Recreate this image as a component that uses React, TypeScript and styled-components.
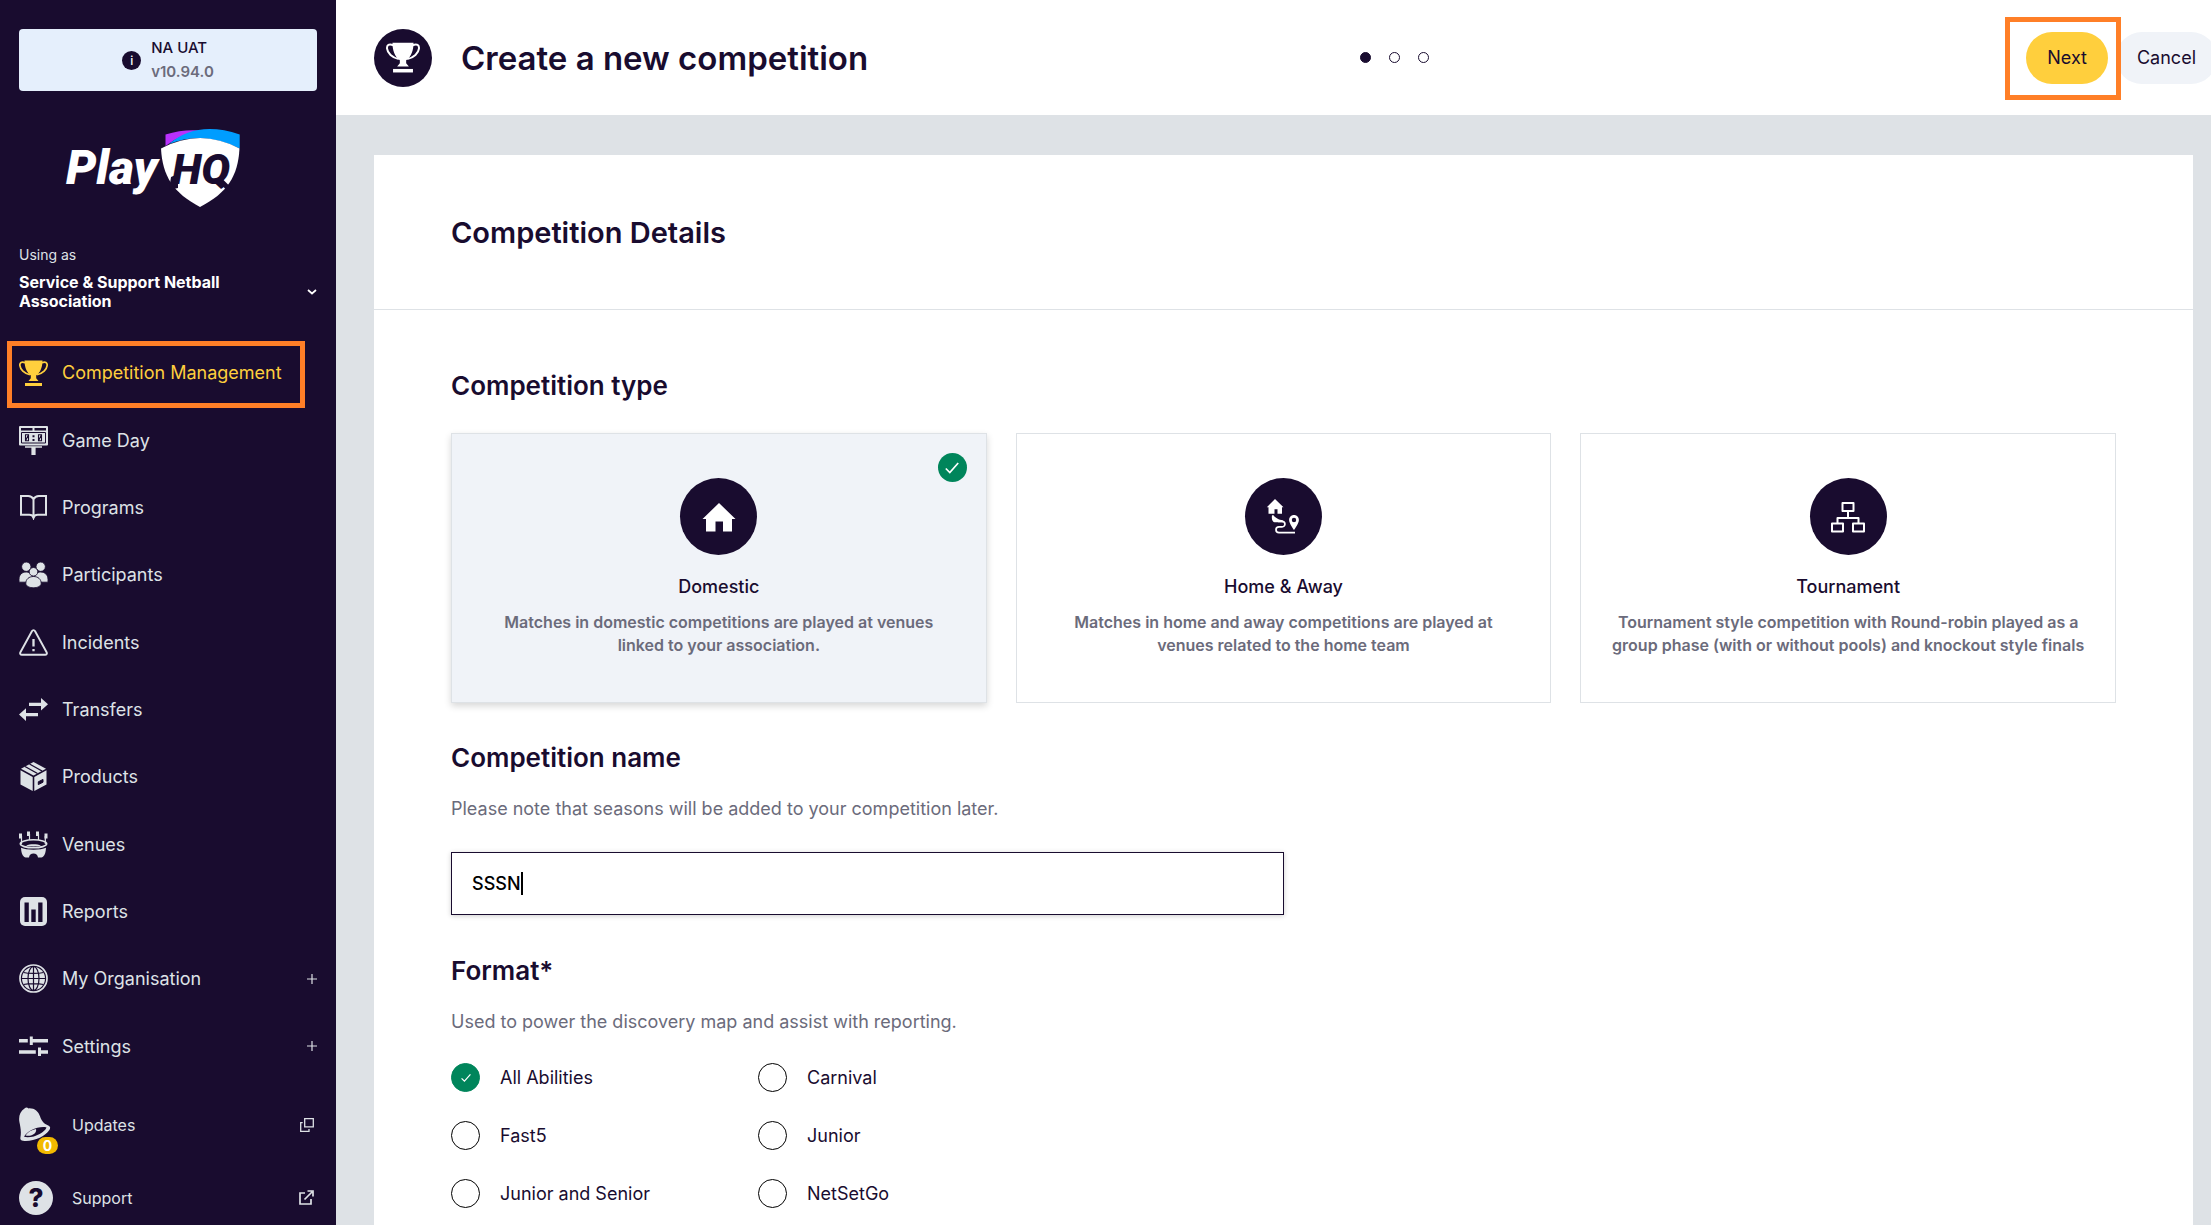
import React, { useState } from "react";
import styled, { createGlobalStyle } from "styled-components";

const ink = "#190c2f";
const mist = "#dee2e6";
const pale = "#f0f3f8";
const muted = "#6b6b7b";
const yellow = "#ffcf3d";
const green = "#00855b";
const marker = "#ff7f27";

const GlobalStyle = createGlobalStyle`
  *, *::before, *::after { box-sizing: border-box; }
  body {
    margin: 0;
    background: ${mist};
    color: ${ink};
    font-family: Inter, "Liberation Sans", sans-serif;
    font-size: 18px;
  }
  button, input { font: inherit; color: inherit; }
  h1, h2, h3, p, ul, fieldset { margin: 0; padding: 0; border: 0; }
  ul { list-style: none; }
  svg { display: block; }
`;

const Shell = styled.div`
  display: grid;
  grid-template-columns: 336px minmax(0, 1fr);
  min-height: 100vh;
`;

/* Sidebar */

const Sidebar = styled.aside`
  display: flex;
  flex-direction: column;
  padding-top: 29px;
  background: ${ink};
  color: ${mist};
`;

const Release = styled.div`
  display: flex;
  align-items: center;
  justify-content: center;
  gap: 10px;
  height: 62px;
  margin: 0 19px;
  border-radius: 4px;
  background: #e5effc;
  color: ${ink};
  font-size: 15px;
  font-weight: 500;
  line-height: 24px;
`;

const InfoDot = styled.span`
  display: grid;
  place-items: center;
  width: 19px;
  height: 19px;
  border-radius: 50%;
  background: ${ink};
  color: #fff;
  font-size: 12px;
  line-height: 19px;
`;

const Version = styled.div`
  color: ${muted};
  font-weight: 600;
`;

const Logo = styled.a`
  display: block;
  margin: 37px 0 0 65px;
`;

const Account = styled.button`
  display: flex;
  flex-direction: column;
  gap: 8px;
  margin: 37px 19px 0;
  padding: 0;
  border: 0;
  background: none;
  color: ${mist};
  font-size: 14px;
  line-height: 20px;
  text-align: left;
`;

const AccountRow = styled.span`
  display: flex;
  align-items: center;
  justify-content: space-between;
  width: 100%;
  color: #fff;
  font-weight: 700;
  line-height: 19px;
`;

const AccountName = styled.span`
  max-width: 220px;
  font-size: 16px;
`;

const Nav = styled.nav`
  display: flex;
  flex: 1;
  margin-top: 28px;
`;

const NavList = styled.ul`
  display: flex;
  flex: 1;
  flex-direction: column;
`;

const NavItem = styled.li<{ $marked?: boolean }>`
  position: relative;
  display: flex;
  flex: 1;
  &::after {
    content: ${(p) => (p.$marked ? '""' : "none")};
    position: absolute;
    inset: 2px 31px -2px 7px;
    border: 5px solid ${marker};
    pointer-events: none;
  }
`;

const NavLink = styled.a<{ $active?: boolean }>`
  display: flex;
  flex: 1;
  align-items: center;
  gap: 14px;
  padding: 0 19px;
  color: ${(p) => (p.$active ? yellow : mist)};
  text-decoration: none;
`;

const NavIcon = styled.span`
  display: grid;
  place-items: center;
  width: 29px;
`;

const Trailing = styled.span`
  margin-left: auto;
`;

const FootLink = styled.a<{ $tall?: boolean }>`
  display: flex;
  align-items: center;
  height: ${(p) => (p.$tall ? 90 : 55)}px;
  padding: 0 22px 0 19px;
  color: ${mist};
  font-size: 16px;
  text-decoration: none;
`;

const FootIcon = styled.span`
  position: relative;
  width: 34px;
  margin-right: 19px;
`;

const Count = styled.span`
  position: absolute;
  left: 18px;
  top: 30px;
  width: 21px;
  height: 17px;
  border-radius: 9px;
  background: #f2ba00;
  color: #fff;
  font-size: 14px;
  font-weight: 700;
  line-height: 17px;
  text-align: center;
`;

const HelpDot = styled.span`
  display: grid;
  place-items: center;
  width: 34px;
  height: 34px;
  border-radius: 50%;
  background: ${mist};
  color: ${ink};
  font-size: 26px;
  font-weight: 800;
`;

/* Main column */

const Main = styled.main`
  display: flex;
  flex-direction: column;
  overflow: hidden;
`;

const TopBar = styled.header`
  display: grid;
  grid-template-columns: 5fr auto 4fr;
  align-items: center;
  height: 115px;
  margin-right: -6px;
  padding-left: 38px;
  background: #fff;
`;

const TitleGroup = styled.div`
  display: flex;
  align-items: center;
  gap: 29px;
`;

const Disc = styled.span<{ $size: number }>`
  display: grid;
  place-items: center;
  width: ${(p) => p.$size}px;
  height: ${(p) => p.$size}px;
  border-radius: 50%;
  background: ${ink};
  color: #fff;
`;

const PageTitle = styled.h1`
  font-size: 33px;
  font-weight: 600;
`;

const Steps = styled.div`
  display: flex;
  align-items: center;
  gap: 18px;
`;

const Step = styled.span<{ $current?: boolean }>`
  width: 11px;
  height: 11px;
  border: 1px solid ${ink};
  border-radius: 50%;
  background: ${(p) => (p.$current ? ink : "#fff")};
`;

const Actions = styled.div`
  display: flex;
  justify-content: flex-end;
  gap: 8px;
`;

const Pill = styled.button<{ $primary?: boolean }>`
  height: 52px;
  padding: 0 21px;
  border: 0;
  border-radius: 26px;
  background: ${(p) => (p.$primary ? yellow : pale)};
`;

const Marked = styled.div`
  position: relative;
  z-index: 1;
  &::after {
    content: "";
    position: absolute;
    inset: -15px -13px -16px -21px;
    border: 5px solid ${marker};
    pointer-events: none;
  }
`;

const Sheet = styled.section`
  flex: 1;
  margin: 40px 18px 0 38px;
  background: #fff;
`;

const SheetHead = styled.div`
  display: flex;
  align-items: center;
  height: 155px;
  padding: 0 77px;
  border-bottom: 1px solid ${mist};
`;

const SheetTitle = styled.h2`
  font-size: 29px;
  font-weight: 600;
`;

const SheetBody = styled.form`
  padding: 60px 77px 16px;
`;

const SectionTitle = styled.h3`
  font-size: 26px;
  font-weight: 600;
  line-height: 32px;
`;

const TypeGrid = styled.div`
  display: grid;
  grid-template-columns: repeat(3, minmax(0, 1fr));
  gap: 29px;
  margin: 31px 0 39px;
`;

const TypeCard = styled.label<{ $selected: boolean }>`
  position: relative;
  display: flex;
  flex-direction: column;
  align-items: center;
  height: 270px;
  padding: 44px 16px 0;
  border: 1px solid ${mist};
  background: ${(p) => (p.$selected ? pale : "#fff")};
  box-shadow: ${(p) => (p.$selected ? "0 3px 7px rgba(0, 0, 0, 0.16)" : "none")};
  text-align: center;
  cursor: pointer;
`;

const HiddenRadio = styled.input`
  position: absolute;
  inset: 0;
  margin: 0;
  opacity: 0;
`;

const Tick = styled.span`
  position: absolute;
  top: 19px;
  right: 19px;
  display: grid;
  place-items: center;
  width: 29px;
  height: 29px;
  border-radius: 50%;
  background: ${green};
`;

const TypeName = styled.span`
  margin-top: 20px;
  font-size: 18px;
  font-weight: 500;
  line-height: 24px;
`;

const TypeText = styled.span`
  margin-top: 12px;
  color: ${muted};
  font-size: 16px;
  font-weight: 600;
  line-height: 23px;
  white-space: pre-line;
`;

const Hint = styled.p`
  margin-top: 23px;
  color: ${muted};
  line-height: 24px;
`;

const NameBox = styled.div`
  display: flex;
  align-items: center;
  width: 50%;
  height: 63px;
  margin: 31px 0 40px;
  padding: 0 20px;
  border: 1px solid ${ink};
  box-shadow: 0 1px 5px rgba(0, 0, 0, 0.2);
`;

const NameInput = styled.input`
  field-sizing: content;
  max-width: 100%;
  padding: 0;
  border: 0;
  outline: 0;
  background: none;
  caret-color: transparent;
  color: #000;
  font-weight: 500;
`;

const Caret = styled.span`
  width: 2px;
  height: 23px;
  background: #000;
`;

const Options = styled.div`
  display: grid;
  grid-template-columns: repeat(2, 307px);
  row-gap: 29px;
  margin-top: 29px;
`;

const Option = styled.label`
  display: flex;
  align-items: center;
  gap: 20px;
  height: 29px;
  cursor: pointer;
`;

const OptionMark = styled.span<{ $on: boolean }>`
  position: relative;
  display: grid;
  place-items: center;
  width: 29px;
  height: 29px;
  border: 1px solid ${(p) => (p.$on ? green : "#000")};
  border-radius: 50%;
  background: ${(p) => (p.$on ? green : "#fff")};
`;

/* Drawings */

const Trophy = ({ w = 29 }: { w?: number }) => (
  <svg width={w} height={(w * 26) / 29} viewBox="0 0 29 26" fill="currentColor">
    <path d="M5.5 .6h18c0 6.500-2 12-6.300 15v2.600l2.300 2.800h-10l2.300-2.800v-2.600C7.500 12.600 5.500 7 5.500.6z" />
    <path d="M6.200 2.800C2.600 1.200.5 2.600.9 5.600c.4 3.800 4.200 7.700 10 9M22.800 2.800c3.600-1.600 5.700-.2 5.300 2.800-.4 3.800-4.200 7.700-10 9" fill="none" stroke="currentColor" strokeWidth="1.700" />
    <path d="M6 23h17v3H6z" />
  </svg>
);

const Scoreboard = () => (
  <svg width="29" height="29" viewBox="0 0 29 29" fill="none">
    <rect width="29" height="19.500" rx="1" fill={mist} />
    <path d="M2 2h11.500v2.500H2zM15.500 2H27v2.500H15.500z" fill={ink} />
    <path d="M2.500 6.500h24v10.500h-24z" stroke={ink} />
    <path d="M6.500 8.800h3v6h-3zM19.500 8.800h3v6h-3zM9.500 8.800l-3 6M22.500 8.800l-3 6" stroke={ink} strokeWidth="1.100" />
    <path d="M13.500 9.300h2v2h-2zM13.500 13h2v2h-2z" fill={ink} />
    <path d="M6 20.300h17v1.400h-6.400V29h-4.200v-7.300H6z" fill={mist} />
  </svg>
);

const Book = () => (
  <svg width="29" height="26" viewBox="0 0 29 26" fill="none" stroke={mist} strokeWidth="2">
    <path d="M14.500 5.200C13.300 3 11.600 2 9.200 2H2v18.800h8.300c2.300 0 3.600.8 4.200 2.800.6-2 1.900-2.800 4.200-2.800H27V2h-7.200c-2.400 0-4.100 1-5.300 3.200zM14.500 5v18.500" />
    <path d="M12 20.800h5l-2.500 4.500z" fill={mist} stroke="none" />
  </svg>
);

const People = () => (
  <svg width="29" height="26" viewBox="0 0 29 26" fill={mist} stroke={ink} strokeWidth=".9">
    <circle cx="7.300" cy="4.700" r="4.700" />
    <circle cx="21.700" cy="4.700" r="4.700" />
    <path d="M0 20.200v-2.800C0 12.600 3 10 7.300 10s7.200 3 7.200 7.400v2.800zM14.500 20.200v-2.800c0-4.800 3-7.400 7.200-7.400S29 13 29 17.400v2.800z" />
    <circle cx="14.500" cy="9.800" r="4.300" />
    <path d="M6.800 21.400c0-4.200 3.200-6.900 7.700-6.900s7.700 2.700 7.700 6.900c0 2.700-3.700 4.400-7.700 4.400s-7.700-1.700-7.700-4.400z" />
  </svg>
);

const Warning = () => (
  <svg width="29" height="27" viewBox="0 0 29 27" fill="none" stroke={mist} strokeWidth="1.900" strokeLinejoin="round">
    <path d="M12.900 2.200 1.400 23.200c-.7 1.300 0 2.600 1.500 2.600h23.200c1.500 0 2.200-1.300 1.500-2.600L16.100 2.200c-.8-1.500-2.400-1.500-3.200 0z" />
    <path d="M14.500 10v7.500M14.500 20v2.300" strokeWidth="2.300" />
  </svg>
);

const Swap = () => (
  <svg width="29" height="23" viewBox="0 0 29 23" fill={mist}>
    <path d="M10 4.700h12V0l7 6.300-7 6.300V8H10zM19 15H7v-4.700l-7 6.300 7 6.300v-4.700h12z" />
  </svg>
);

const Box = () => (
  <svg width="27" height="29" viewBox="0 0 27 29">
    <path d="M13.500 0 26 6.700 13.500 13.600 1 6.700z" fill={mist} />
    <path d="M.5 8.200 12.700 15v14L.5 22.500zM26.500 8.200 14.300 15v14l12.200-6.500z" fill={mist} />
    <path d="m5 4.500 12.500 7M9.500 2 22 9" stroke={ink} strokeWidth="1.400" />
    <path d="m18.300 19.800 4.700-2.400v2.800l-4.700 2.400z" fill={ink} stroke={ink} />
  </svg>
);

const Stadium = () => (
  <svg width="29" height="27" viewBox="0 0 29 27" fill="none">
    <path d="M0 2.500h3v5H0zM8 .5h3v4.500H8zM17 .5h3v4.500h-3zM25.500 2.500h3v5h-3z" fill={mist} />
    <path d="M2.500 5v8M10.500 3v6M19.500 3v6M26.300 5v8" stroke={mist} strokeWidth="1.200" />
    <ellipse cx="14.500" cy="12.800" rx="13.200" ry="4" stroke={mist} strokeWidth="1.600" />
    <path d="M7 14.500c4-1.800 11-1.800 15 0-4 1.200-11 1.200-15 0z" fill={mist} />
    <path d="M2 16.800c5 2.600 20 2.600 25 0-.2 4.500-1 7.200-3 8.900-1.500 1-3.600 1-5 .8-.3-2.500-2-4-4.500-4s-4.200 1.500-4.500 4c-1.400.2-3.500.2-5-.8-2-1.700-2.800-4.400-3-8.900z" fill={mist} />
  </svg>
);

const Bars = () => (
  <svg width="27" height="29" viewBox="0 0 27 29">
    <rect width="27" height="29" rx="5" fill={mist} />
    <path d="M4.500 5.500h4.300V25H4.500zM11.300 12.500h4.400V25h-4.400zM18.200 5.500h4.300V25h-4.300z" fill={ink} />
  </svg>
);

const Globe = () => (
  <svg width="29" height="29" viewBox="0 0 29 29" fill="none">
    <circle cx="14.500" cy="14.500" r="13.500" stroke={mist} strokeWidth="1.700" />
    <circle cx="14.500" cy="14.500" r="11.500" fill={mist} />
    <g stroke={ink} strokeWidth="1.200">
      <ellipse cx="14.500" cy="14.500" rx="5.500" ry="12" />
      <path d="M3 14.500h23M4.500 8.500c5 1.200 15 1.200 20 0M4.500 20.500c5-1.200 15-1.200 20 0M14.500 3v23" />
    </g>
  </svg>
);

const Sliders = () => (
  <svg width="29" height="20" viewBox="0 0 29 20" fill={mist}>
    <path d="M0 3h8.800v3.500H0zM10.800.5h3V3H29v3.500H13.800V9h-3zM0 14.200h16.800v3.500H0zM19 11.500h3v2.700h7v3.500h-7v2.300h-3z" />
  </svg>
);

const Bell = () => (
  <svg width="34" height="36" viewBox="0 0 34 36">
    <path d="M5.500 1.500C7 0 8.500.4 9.300 1.400c6-.5 10 2.800 11.800 8.100 1.300 4 3.200 7 8.600 9.200 1.700.8 1.800 2.400.8 4C26.500 29.500 14 35 4 33.800c-2-.2-3-1.500-2.600-3.400C2.500 24.500 1.400 20 .4 15-.6 9.500 1 4.500 5.500 1.500z" fill={mist} />
    <path d="M5 29.800c2.500-5.500 14.500-11.200 22.500-9.400-1.500 5-14 11.600-22.500 9.400z" fill={ink} />
    <path d="M6.500 28.500c2-3.500 6-5.500 10.500-6.500 1.200 4.200-4.500 8-10.500 6.500z" fill={mist} />
  </svg>
);

const Copy = () => (
  <svg width="14" height="14" viewBox="0 0 14 14" fill="none" stroke={mist} strokeWidth="1.300">
    <path d="M4.700.7h8.600v8.100H4.700zM2.700 4.700h-2v8.600h8.300v-2.300" />
  </svg>
);

const External = () => (
  <svg width="15" height="15" viewBox="0 0 15 15" fill="none" stroke={mist} strokeWidth="1.700">
    <path d="M6 3H1v11h11V9M5.500 9.500 13 2M8.500 1H14v5.500" />
  </svg>
);

const Plus = () => (
  <svg width="10" height="10" viewBox="0 0 10 10" stroke={mist} strokeWidth="1.200">
    <path d="M5 0v10M0 5h10" />
  </svg>
);

const Chevron = () => (
  <svg width="10" height="6" viewBox="0 0 10 6" fill="none" stroke="#fff" strokeWidth="1.700">
    <path d="m1 1 4 3.500L9 1" />
  </svg>
);

const Check = ({ w }: { w: number }) => (
  <svg width={w} height={w} viewBox="0 0 14 14" fill="none" stroke="#fff" strokeWidth="1.700">
    <path d="m.8 7.500 4 4L13.200 2" />
  </svg>
);

const House = () => (
  <svg width="34" height="30" viewBox="0 0 34 30" fill="#fff">
    <path d="M17 1 33.500 17H30v12.500h-9V19.500h-7.500v10H4V17H.5z" />
  </svg>
);

const Route = () => (
  <svg width="34" height="36" viewBox="0 0 34 36" fill="none">
    <path d="M9 0 17.500 8.300H16v6.500h-4.500v-4.500h-3v4.500H2.500V8.300H.8z" fill="#fff" />
    <path d="M6 16.300h1.500c1.500 2.500 5.500 4.600 9.500 5.100v1.800H8.500C6 23 5.500 19 6 16.300z" fill="#fff" />
    <path d="M12 22.300h4c3.800 0 4 5.600 0 5.600h-3c-4 0-4 5.800 0 5.800h16" stroke="#fff" strokeWidth="1.700" />
    <path d="M28 16c-2.900 0-4.900 2.200-4.900 4.900 0 3.500 4.900 10 4.900 10s4.900-6.500 4.900-10c0-2.700-2-4.900-4.900-4.900zm0 2.800a2.200 2.200 0 1 1 0 4.400 2.200 2.200 0 0 1 0-4.400z" fill="#fff" fillRule="evenodd" />
  </svg>
);

const Bracket = () => (
  <svg width="34" height="32" viewBox="0 0 34 32" fill="none" stroke="#fff" strokeWidth="2" strokeLinejoin="round">
    <path d="M11.500 2h11v8h-11zM1 22.500h11v8H1zM22 22.500h11v8H22zM17 10v7M6.500 22.500V17h21v5.500" />
  </svg>
);

const LogoArt = () => (
  <svg width="177" height="80" viewBox="0 0 177 80" role="img" aria-label="PlayHQ">
    <path d="M100.500 18V6.500Q118 1 136 2.600 116 6 100.500 18z" fill="#b931fc" />
    <path d="M104 16Q132-8 174.700 6.500V20.500Q138 2 104 16z" fill="#009dff" />
    <path d="M96 20.500q39-21 78.500 0c-1.500 28-12.500 44.500-39.500 58.500-26.500-14-37.500-30.500-39-58.500z" fill="#fff" />
    <path d="M106 49 113 46V60L104 62z" fill={ink} />
    <path d="M155 52 166 63" stroke={ink} strokeWidth="5" />
    <text x="1" y="56" fill="#fff" fontFamily="Roboto, sans-serif" fontSize="48" fontWeight="900" fontStyle="italic">Play</text>
    <text x="107" y="56" fill={ink} fontFamily="Roboto, sans-serif" fontSize="43" fontWeight="900" fontStyle="italic">HQ</text>
  </svg>
);

const navItems = [
  { label: "Competition Management", icon: <Trophy />, active: true },
  { label: "Game Day", icon: <Scoreboard /> },
  { label: "Programs", icon: <Book /> },
  { label: "Participants", icon: <People /> },
  { label: "Incidents", icon: <Warning /> },
  { label: "Transfers", icon: <Swap /> },
  { label: "Products", icon: <Box /> },
  { label: "Venues", icon: <Stadium /> },
  { label: "Reports", icon: <Bars /> },
  { label: "My Organisation", icon: <Globe />, more: true },
  { label: "Settings", icon: <Sliders />, more: true },
];

const types = [
  {
    name: "Domestic",
    icon: <House />,
    text: "Matches in domestic competitions are played at venues\nlinked to your association.",
  },
  {
    name: "Home & Away",
    icon: <Route />,
    text: "Matches in home and away competitions are played at\nvenues related to the home team",
  },
  {
    name: "Tournament",
    icon: <Bracket />,
    text: "Tournament style competition with Round-robin played as a\ngroup phase (with or without pools) and knockout style finals",
  },
];

const formats = ["All Abilities", "Carnival", "Fast5", "Junior", "Junior and Senior", "NetSetGo"];

export default function App() {
  const [type, setType] = useState("Domestic");
  const [format, setFormat] = useState("All Abilities");
  const [name, setName] = useState("SSSN");

  return (
    <Shell>
      <GlobalStyle />
      <Sidebar>
        <Release>
          <InfoDot>i</InfoDot>
          <div>
            NA UAT
            <Version>v10.94.0</Version>
          </div>
        </Release>
        <Logo href="#home">
          <LogoArt />
        </Logo>
        <Account type="button">
          Using as
          <AccountRow>
            <AccountName>Service &amp; Support Netball Association</AccountName>
            <Chevron />
          </AccountRow>
        </Account>
        <Nav>
          <NavList>
            {navItems.map((item) => (
              <NavItem key={item.label} $marked={item.active}>
                <NavLink href="#nav" $active={item.active}>
                  <NavIcon>{item.icon}</NavIcon>
                  {item.label}
                  {item.more && (
                    <Trailing>
                      <Plus />
                    </Trailing>
                  )}
                </NavLink>
              </NavItem>
            ))}
          </NavList>
        </Nav>
        <FootLink href="#updates" $tall>
          <FootIcon>
            <Bell />
            <Count>0</Count>
          </FootIcon>
          Updates
          <Trailing>
            <Copy />
          </Trailing>
        </FootLink>
        <FootLink href="#support">
          <FootIcon>
            <HelpDot>?</HelpDot>
          </FootIcon>
          Support
          <Trailing>
            <External />
          </Trailing>
        </FootLink>
      </Sidebar>

      <Main>
        <TopBar>
          <TitleGroup>
            <Disc $size={58}>
              <Trophy w={34} />
            </Disc>
            <PageTitle>Create a new competition</PageTitle>
          </TitleGroup>
          <Steps>
            <Step $current />
            <Step />
            <Step />
          </Steps>
          <Actions>
            <Marked>
              <Pill type="submit" form="competition" $primary>
                Next
              </Pill>
            </Marked>
            <Pill type="button">Cancel</Pill>
          </Actions>
        </TopBar>

        <Sheet>
          <SheetHead>
            <SheetTitle>Competition Details</SheetTitle>
          </SheetHead>
          <SheetBody id="competition" onSubmit={(e) => e.preventDefault()}>
            <SectionTitle>Competition type</SectionTitle>
            <TypeGrid>
              {types.map((t) => (
                <TypeCard key={t.name} $selected={type === t.name}>
                  <HiddenRadio type="radio" name="type" checked={type === t.name} onChange={() => setType(t.name)} />
                  {type === t.name && (
                    <Tick>
                      <Check w={14} />
                    </Tick>
                  )}
                  <Disc $size={77}>{t.icon}</Disc>
                  <TypeName>{t.name}</TypeName>
                  <TypeText>{t.text}</TypeText>
                </TypeCard>
              ))}
            </TypeGrid>

            <SectionTitle as="label" htmlFor="name">
              Competition name
            </SectionTitle>
            <Hint>Please note that seasons will be added to your competition later.</Hint>
            <NameBox>
              <NameInput id="name" value={name} onChange={(e) => setName(e.target.value)} />
              <Caret />
            </NameBox>

            <SectionTitle>Format*</SectionTitle>
            <Hint>Used to power the discovery map and assist with reporting.</Hint>
            <Options>
              {formats.map((f) => (
                <Option key={f}>
                  <OptionMark $on={format === f}>
                    <HiddenRadio type="radio" name="format" checked={format === f} onChange={() => setFormat(f)} />
                    {format === f && <Check w={10} />}
                  </OptionMark>
                  {f}
                </Option>
              ))}
            </Options>
          </SheetBody>
        </Sheet>
      </Main>
    </Shell>
  );
}
